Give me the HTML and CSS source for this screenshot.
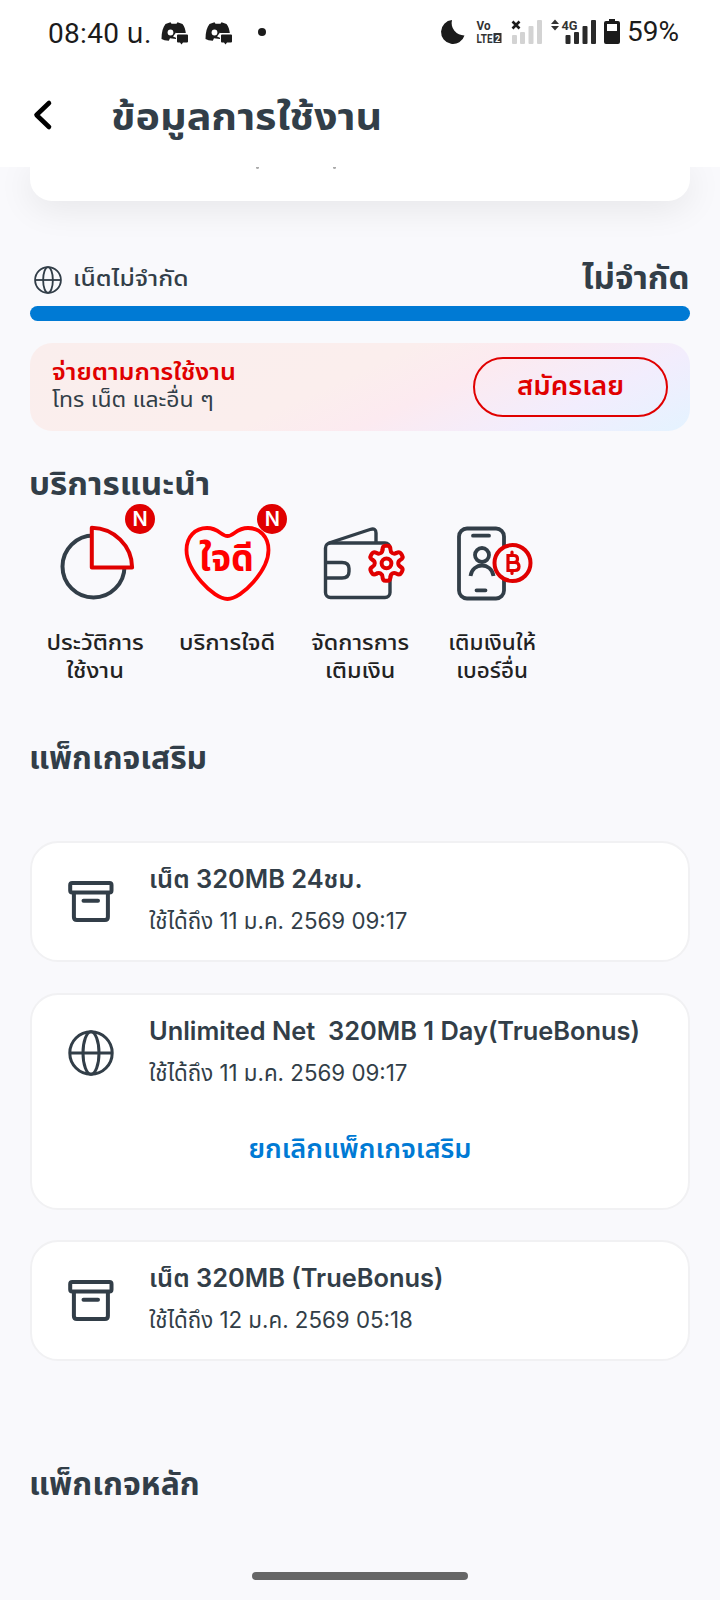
FILE: index.html
```html
<!DOCTYPE html>
<html lang="th">
<head>
<meta charset="utf-8">
<title>ข้อมูลการใช้งาน</title>
<link rel="stylesheet" href="styles.css">
</head>
<body>
<svg width="0" height="0" class="defs">
  <symbol id="globe" viewBox="0 0 46 46"><g fill="none" stroke="currentColor"><circle cx="23" cy="23" r="21.2"/><ellipse cx="23" cy="23" rx="8" ry="21.2"/><path d="M2 23h42"/></g></symbol>
  <symbol id="box" viewBox="0 0 46 42"><g fill="none" stroke="currentColor" stroke-width="4" stroke-linejoin="round" stroke-linecap="round"><rect x="2.200" y="2" width="41.300" height="9.500" rx="2"/><path d="M5.900 12v24q0 3 3 3h28q3 0 3-3V12M15.500 19.800h14.500"/></g></symbol>
  <symbol id="chat" viewBox="0 0 28 24"><path d="M.5 17C.5 10 2 5 4.500 2L9.500.3l1 1.500h5l1-1.500 5 1.700C23.500 4.500 24.500 8 24.800 11H15v6l-6-.8-1.200 2.500Q3 18.500.5 17z" fill="#1b1b1b"/><circle cx="9.500" cy="10.500" r="2.900" fill="#fff"/><path d="M15 10.500l-3 4 3.500 1.500z" fill="#fff"/><path d="M17 12.500h9q1 0 1 1v6q0 1-1 1h-4l-1.500 2-1.500-2h-2q-1 0-1-1v-6q0-1 1-1z" fill="#1b1b1b"/></symbol>
  <symbol id="tooth" overflow="visible"><path d="M-4-13.500Q-4-17.500-1-17.500H1Q4-17.500 4-13.500C4-10.500 7.090-8.710 9.690-10.210" fill="none" stroke="#e00000" stroke-width="4" stroke-linecap="round"/></symbol>
</svg>
<header class="top">
  <div class="status">
    <span class="clock">08:40 น.</span>
    <svg class="chat" width="28" height="24"><use href="#chat"/></svg>
    <svg class="chat second" width="28" height="24"><use href="#chat"/></svg>
    <span class="dot"></span>
    <svg class="tray" width="182" height="28" viewBox="0 0 182 28">
      <path d="M12 2A12 12 0 1 0 24.500 17.500 12.500 12.500 0 0 1 12 2z" fill="#1b1b1b"/>
      <g class="volte"><text x="36.500" y="11.500" font-size="12" textLength="14" lengthAdjust="spacingAndGlyphs">Vo</text><text x="36.500" y="25" font-size="12" textLength="16" lengthAdjust="spacingAndGlyphs">LTE</text></g>
      <rect x="53.500" y="15" width="8" height="10" fill="#333"/><text x="54.900" y="23.500" font-size="9" font-weight="700" fill="#fff" class="rb">2</text>
      <g fill="#d3d3d3"><rect x="72" y="17" width="5" height="9" rx="1"/><rect x="80" y="14" width="5" height="12" rx="1"/><rect x="88.500" y="8" width="5" height="18" rx="1"/><rect x="97" y="2" width="5" height="24" rx="1"/></g>
      <path d="M72.500 3.500l7 7m0-7l-7 7" stroke="#1b1b1b" stroke-width="2.600"/>
      <path d="M111 6l4-4.500 4 4.500zM111 8l4 4.500 4-4.500z" fill="#333"/>
      <text x="121.500" y="11.500" font-size="13.500" textLength="16" lengthAdjust="spacingAndGlyphs" class="volte">4G</text>
      <g fill="#2a2a2a"><rect x="125.500" y="17" width="5" height="9" rx="1"/><rect x="134" y="14" width="5" height="12" rx="1"/><rect x="142.500" y="8" width="5" height="18" rx="1"/><rect x="151" y="2" width="5" height="24" rx="1"/></g>
      <path d="M166 3h3V1h6v2h3q2 0 2 2v19q0 2-2 2h-12q-2 0-2-2V5q0-2 2-2z" fill="#1b1b1b"/><rect x="167" y="6" width="10" height="7" fill="#fff"/>
    </svg>
    <span class="pct">59%</span>
  </div>
  <div class="bar">
    <svg width="20" height="32" viewBox="0 0 20 32"><path d="M16 4L3.500 16 16 28" fill="none" stroke="#000" stroke-width="4.600" stroke-linecap="round" stroke-linejoin="round"/></svg>
    <h1 class="title">ข้อมูลการใช้งาน</h1>
  </div>
</header>
<main class="page">
  <section class="summary"><i class="mark"></i><i class="mark"></i></section>
  <section class="quota">
    <svg class="globe small" width="28" height="28" stroke-width="3"><use href="#globe"/></svg>
    <span class="quota-name">เน็ตไม่จำกัด</span>
    <strong class="quota-value">ไม่จำกัด</strong>
  </section>
  <div class="meter"></div>
  <section class="banner">
    <div class="banner-text"><b class="b1">จ่ายตามการใช้งาน</b><span class="b2">โทร เน็ต และอื่น ๆ</span></div>
    <span class="join"><span class="join-label">สมัครเลย</span></span>
  </section>
  <h2 class="heading h-service">บริการแนะนำ</h2>
  <section class="services">
    <div class="service">
      <svg width="132" height="100" viewBox="0 0 132 100"><circle cx="64.500" cy="61.500" r="31" fill="none" stroke="#323e48" stroke-width="4"/><path d="M63.500 22.300v39.700h40.300A41 40 0 0 0 63.500 22.300z" transform="translate(-.7 .5)" fill="#f9f9fc" stroke="#e00000" stroke-width="4" stroke-linejoin="round"/></svg>
      <span class="badge">N</span>
      <p class="label">ประวัติการ<br>ใช้งาน</p>
    </div>
    <div class="service">
      <svg width="132" height="100" viewBox="0 0 132 100"><path d="M66.500 31C60 31 58 23 46 23 34 23 25.500 32 25.500 45 25.500 65 52 94 66.500 94S107.500 65 107.500 45C107.500 32 99 23 87 23S73 31 66.500 31z" fill="none" stroke="#f00" stroke-width="3.800"/><text class="jaidee" x="38" y="66" textLength="55" lengthAdjust="spacingAndGlyphs">ใจดี</text></svg>
      <span class="badge">N</span>
      <p class="label">บริการใจดี</p>
    </div>
    <div class="service">
      <svg width="132" height="100" viewBox="0 0 132 100" fill="none" stroke-width="3.400" stroke-linejoin="round"><g stroke="#323e48"><rect x="31.500" y="38" width="64.500" height="54.500" rx="5"/><path d="M35 38l41-13.500q6-2 6 3.500v10M32 57.500h16q7 0 7 6v3q0 6.500-7 6.500H32"/></g><g transform="translate(92.500 58.300)"><circle r="15" fill="#f9f9fc"/><use href="#tooth"/><use href="#tooth" transform="rotate(60)"/><use href="#tooth" transform="rotate(120)"/><use href="#tooth" transform="rotate(180)"/><use href="#tooth" transform="rotate(240)"/><use href="#tooth" transform="rotate(300)"/><circle r="4.900" stroke="#e00000" stroke-width="4"/></g></svg>
      <p class="label l3">จัดการการ<br>เติมเงิน</p>
    </div>
    <div class="service">
      <svg width="132" height="100" viewBox="0 0 132 100" fill="none" stroke-linecap="round"><g stroke="#323e48" stroke-width="3.800"><rect x="33" y="23.500" width="45" height="70" rx="8"/><path d="M47 30.700h16M50.500 85.300h9"/><circle cx="56" cy="50" r="7"/><path d="M44.500 71c2-14 21-14 23 0" stroke-linecap="butt"/></g><g stroke="#e00000"><circle cx="86.500" cy="58" r="18" fill="#f9f9fc" stroke-width="4"/><path d="M82 50.500v15h7q4 0 4-4t-4-4h-6.500H88q3.500 0 3.500-3.500t-3.500-3.500zM86 47v3m0 15.500v3" stroke-width="3.200"/></g></svg>
      <p class="label l4">เติมเงินให้<br>เบอร์อื่น</p>
    </div>
  </section>
  <h2 class="heading h-extra">แพ็กเกจเสริม</h2>
  <section class="packages">
    <article class="package">
      <svg class="pkg-icon" width="46" height="42"><use href="#box"/></svg>
      <div><h3 class="name">เน็ต 320MB 24ชม.</h3><p class="expiry">ใช้ได้ถึง 11 ม.ค. 2569 09:17</p></div>
    </article>
    <article class="package tall">
      <svg class="pkg-icon pkg-globe" width="46" height="46" stroke-width="3"><use href="#globe"/></svg>
      <div><h3 class="name">Unlimited Net&nbsp; 320MB 1 Day(TrueBonus)</h3><p class="expiry">ใช้ได้ถึง 11 ม.ค. 2569 09:17</p></div>
      <a class="cancel">ยกเลิกแพ็กเกจเสริม</a>
    </article>
    <article class="package">
      <svg class="pkg-icon" width="46" height="42"><use href="#box"/></svg>
      <div><h3 class="name">เน็ต 320MB (TrueBonus)</h3><p class="expiry">ใช้ได้ถึง 12 ม.ค. 2569 05:18</p></div>
    </article>
  </section>
  <h2 class="heading h-main">แพ็กเกจหลัก</h2>
  <div class="gesture"></div>
</main>
</body>
</html>
```
FILE: styles.css
```css
* { box-sizing: border-box; }
body { margin: 0; width: 720px; height: 1600px; overflow: hidden; background: #f9f9fc; color: #323e48; font-family: Inter, "Noto Sans Thai", "Noto Sans", sans-serif; }
h1, h2, h3, p { margin: 0; white-space: nowrap; }
svg { display: block; flex: none; }
.defs { position: absolute; }
.top { position: relative; z-index: 2; height: 167px; background: #fff; }
.status { display: flex; height: 64px; padding: 18px 0 0 48px; font: 28px/28px Roboto, "Noto Sans Thai", sans-serif; color: #1b1b1b; }
.clock { width: 113px; padding-top: 2px; white-space: nowrap; letter-spacing: .3px; }
.chat { margin-top: 4px; }
.second { margin-left: 16px; }
.dot { width: 8px; height: 8px; margin: 10px 0 0 25px; border-radius: 50%; background: #1b1b1b; }
.tray { margin-left: 174px; }
.volte { font-family: Roboto, sans-serif; font-weight: 700; fill: #333; }
.rb { font-family: Roboto, sans-serif; }
.pct { margin-left: 5px; }
.bar { display: flex; height: 103px; padding: 35px 0 0 33px; }
.title { margin: -8px 0 0 58px; font-size: 38px; line-height: 50px; font-weight: 700; transform: scaleX(1.087); transform-origin: left; }
.page { display: flow-root; }
.summary { position: relative; height: 34px; margin: 0 30px; border-radius: 0 0 22px 22px; background: #fff; box-shadow: 0 6px 36px rgba(0,0,0,.09); display: flex; gap: 74px; padding-left: 226px; }
.mark { width: 3px; height: 2px; background: #aaa; border-radius: 0 0 2px 2px; }
.quota { display: flex; height: 105px; margin: 0 30px; padding: 51px 0 0 4px; }
.small { margin-top: 14px; }
.quota-name { margin: 10px 0 0 11px; font-size: 22px; line-height: 32px; font-weight: 500; white-space: nowrap; transform: scaleX(1.12); transform-origin: left; }
.quota-value { margin: 1px 0 0 auto; font-size: 31px; line-height: 50px; white-space: nowrap; transform: scaleX(1.07); transform-origin: right; }
.meter { height: 15px; margin: 0 30px; border-radius: 8px; background: #007ad4; }
.banner { display: flex; height: 88px; margin: 22px 30px 0; padding: 14px 22px 0; border-radius: 22px; background: linear-gradient(155deg, #faeeed 0%, #fbeeed 46%, #fceaf0 60%, #f2edfd 80%, #e4f3ff 100%); }
.banner-text { display: flex; flex-direction: column; align-items: flex-start; padding-top: 1px; white-space: nowrap; }
.b1 { font-size: 22.5px; line-height: 28px; color: #e00000; font-weight: 600; transform: scaleX(1.115); transform-origin: left; }
.b2 { font-size: 22px; line-height: 26px; transform: scaleX(1.045); transform-origin: left; }
.join { display: flex; width: 195px; height: 60px; margin-left: auto; justify-content: center; border: 2px solid #e00000; border-radius: 30px; color: #e00000; font-size: 26px; line-height: 54px; font-weight: 600; white-space: nowrap; }
.join-label { transform: scaleX(1.06); }
.heading { width: max-content; height: 50px; margin-left: 29px; font-size: 31px; line-height: 50px; font-weight: 700; transform-origin: left; }
.h-service { margin-top: 28px; transform: scaleX(1.072); }
.services { display: flex; height: 195px; padding-left: 29px; margin-top: -4px; }
.service { position: relative; width: 132.3px; color: #222; }
.badge { position: absolute; left: 96px; top: -1px; width: 30px; height: 30px; border-radius: 50%; background: #e00000; color: #fff; text-align: center; font-size: 20px; line-height: 30px; font-weight: 600; }
.jaidee { font-size: 37px; font-weight: 700; fill: #f00; }
.label { text-align: center; margin-top: 23px; font-size: 22px; line-height: 28px; font-weight: 500; transform: scaleX(1.075); }
.l3 { transform: scaleX(1.06); }
.l4 { transform: scaleX(1.02); }
.h-extra { margin-top: 33px; height: 112px; transform: scaleX(1.025); }
.packages { display: flex; flex-direction: column; gap: 30.5px; padding: 0 30px; margin-top: -4px; }
.package { display: flex; flex-wrap: wrap; align-content: flex-start; height: 121px; padding: 18px 0 0 36px; background: #fff; border: 2px solid #f1f1f3; border-radius: 28px; }
.tall { height: 217px; }
.pkg-icon { margin: 20px 35px 0 0; }
.pkg-globe { margin-top: 17px; }
.name { font-size: 25.4px; line-height: 36px; font-weight: 600; }
.expiry { margin-top: 6px; font-size: 22.3px; line-height: 36px; }
.cancel { width: 100%; margin: 33px 36px 0 0; text-align: center; font-size: 26px; line-height: 50px; font-weight: 600; color: #007ad4; transform: scaleX(1.045); }
.h-main { margin-top: 98px; height: 113px; transform: scaleX(1.03); }
.gesture { width: 216px; height: 8px; margin: 0 auto; border-radius: 4px; background: #666; }
```
